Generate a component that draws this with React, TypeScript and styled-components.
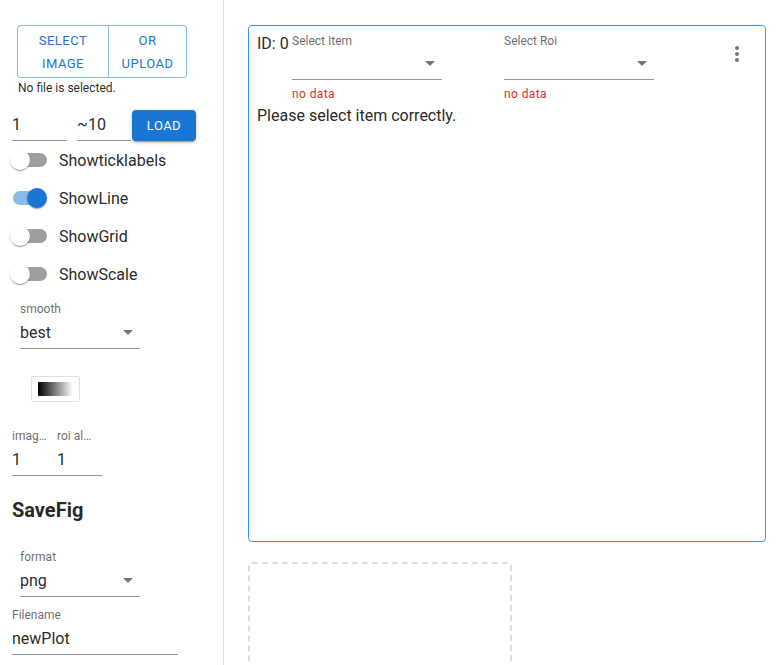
import React, { FC } from 'react';
import styled, { createGlobalStyle } from 'styled-components';

const Global = createGlobalStyle`
  html, body {
    margin: 0;
    padding: 0;
    overflow: hidden;
    font-family: Roboto, 'Liberation Sans', sans-serif;
    color: rgba(0, 0, 0, 0.87);
  }
  * { box-sizing: border-box; }
`;

const blue = '#1976d2';

const Arrow: FC = () => (
  <svg width="24" height="24" viewBox="0 0 24 24">
    <path d="M7 10l5 5 5-5z" fill="rgba(0,0,0,0.54)" />
  </svg>
);

const MoreVert: FC = () => (
  <svg width="24" height="24" viewBox="0 0 24 24">
    <path
      d="M12 8c1.1 0 2-.9 2-2s-.9-2-2-2-2 .9-2 2 .9 2 2 2zm0 2c-1.1 0-2 .9-2 2s.9 2 2 2 2-.9 2-2-.9-2-2-2zm0 6c-1.1 0-2 .9-2 2s.9 2 2 2 2-.9 2-2-.9-2-2-2z"
      fill="rgba(0,0,0,0.54)"
    />
  </svg>
);

const SelectField: FC<{ label: string; value?: string; width: number; helper?: string; className?: string }> = ({
  label,
  value,
  width,
  helper,
  className,
}) => (
  <Field $width={width} className={className}>
    <Label $line={14}>{label}</Label>
    <InputBox>
      <span>{value}</span>
      <Arrow />
    </InputBox>
    {helper && <Helper>{helper}</Helper>}
  </Field>
);

const Toggle: FC<{ label: string; on?: boolean }> = ({ label, on }) => (
  <SwitchRow>
    <SwitchRoot>
      <Track $on={on} />
      <Thumb $on={on} />
    </SwitchRoot>
    <span>{label}</span>
  </SwitchRow>
);

export default function App() {
  return (
    <Page>
      <Global />
      <Sidebar>
        <ButtonGroup>
          <OutlineButton $width={92}>Select image</OutlineButton>
          <OutlineButton $width={78}>or upload</OutlineButton>
        </ButtonGroup>
        <FileNote>No file is selected.</FileNote>
        <RangeRow>
          <Field $width={55}>
            <InputBox>1</InputBox>
          </Field>
          <Field $width={54} style={{ marginLeft: 10 }}>
            <InputBox>~10</InputBox>
          </Field>
          <LoadButton>Load</LoadButton>
        </RangeRow>
        <Toggle label="Showticklabels" />
        <Toggle label="ShowLine" on />
        <Toggle label="ShowGrid" />
        <Toggle label="ShowScale" />
        <Indented $top={8}>
          <Field $width={120}>
            <Label>smooth</Label>
            <InputBox>
              <span>best</span>
              <Arrow />
            </InputBox>
          </Field>
        </Indented>
        <ColormapButton>
          <Gradient />
        </ColormapButton>
        <PairRow>
          <Field $width={45}>
            <Label>imag…</Label>
            <InputBox>1</InputBox>
          </Field>
          <Field $width={45}>
            <Label>roi al…</Label>
            <InputBox>1</InputBox>
          </Field>
        </PairRow>
        <Heading>SaveFig</Heading>
        <Indented $top={27}>
          <Field $width={120}>
            <Label>format</Label>
            <InputBox>
              <span>png</span>
              <Arrow />
            </InputBox>
          </Field>
        </Indented>
        <FilenameField $width={166}>
          <Label>Filename</Label>
          <InputBox>newPlot</InputBox>
        </FilenameField>
      </Sidebar>
      <Main>
        <Card>
          <CardHeader>
            <IdText>ID: 0</IdText>
            <SelectField label="Select Item" width={150} helper="no data" />
            <RoiSelect label="Select Roi" width={150} helper="no data" />
            <IconButton>
              <MoreVert />
            </IconButton>
          </CardHeader>
          <Message>Please select item correctly.</Message>
        </Card>
        <DropZone />
      </Main>
    </Page>
  );
}

const Page = styled.div`
  display: flex;
  min-height: 100vh;
`;

const Sidebar = styled.aside`
  width: 224px;
  flex-shrink: 0;
  min-height: 100vh;
  border-right: 1px solid #e0e0e0;
  padding: 25px 0 0 12px;
  display: flex;
  flex-direction: column;
  align-items: flex-start;
`;

const ButtonGroup = styled.div`
  display: flex;
  margin-left: 5px;
`;

const OutlineButton = styled.button<{ $width: number }>`
  width: ${({ $width }) => $width}px;
  padding: 3px 6px 2px;
  background: #fff;
  border: 1px solid rgba(25, 118, 210, 0.5);
  font-family: Roboto, 'Liberation Sans', sans-serif;
  font-size: 13px;
  font-weight: 400;
  letter-spacing: 0.46px;
  line-height: 23px;
  text-transform: uppercase;
  color: ${blue};
  word-spacing: 40px;
  &:first-child {
    border-radius: 4px 0 0 4px;
  }
  &:last-child {
    border-radius: 0 4px 4px 0;
    border-left: none;
  }
`;

const FileNote = styled.div`
  margin-top: 3px;
  margin-left: 6px;
  font-size: 12px;
  line-height: 14px;
`;

const RangeRow = styled.div`
  display: flex;
  align-items: flex-end;
  margin-top: 14px;
`;

const LoadButton = styled.button`
  width: 64px;
  height: 31px;
  margin-left: 1px;
  border: none;
  border-radius: 4px;
  background: ${blue};
  color: #fff;
  font-family: Roboto, 'Liberation Sans', sans-serif;
  font-size: 13px;
  font-weight: 400;
  letter-spacing: 0.46px;
  text-transform: uppercase;
  box-shadow: 0 3px 1px -2px rgba(0, 0, 0, 0.2), 0 2px 2px 0 rgba(0, 0, 0, 0.14),
    0 1px 5px 0 rgba(0, 0, 0, 0.12);
`;

const Field = styled.div<{ $width: number }>`
  width: ${({ $width }) => $width}px;
  display: flex;
  flex-direction: column;
`;

const Label = styled.div<{ $line?: number }>`
  font-size: 12px;
  line-height: ${({ $line }) => $line ?? 16}px;
  color: rgba(0, 0, 0, 0.6);
  white-space: nowrap;
`;

const InputBox = styled.div`
  height: 32px;
  padding: 4px 0 5px;
  display: flex;
  align-items: center;
  justify-content: space-between;
  font-size: 16px;
  border-bottom: 1px solid rgba(0, 0, 0, 0.42);
  svg {
    flex-shrink: 0;
  }
`;

const Helper = styled.div`
  margin-top: 4px;
  font-size: 12px;
  line-height: 20px;
  letter-spacing: 0.4px;
  color: #d32f2f;
`;

const SwitchRow = styled.div`
  display: flex;
  align-items: center;
  height: 38px;
  margin-left: -11px;
  font-size: 16px;
`;

const SwitchRoot = styled.div`
  width: 58px;
  height: 38px;
  padding: 12px;
  display: flex;
  align-items: center;
`;

const Track = styled.div<{ $on?: boolean }>`
  width: 34px;
  height: 14px;
  border-radius: 7px;
  background: ${({ $on }) => ($on ? 'rgba(25, 118, 210, 0.5)' : 'rgba(0, 0, 0, 0.38)')};
`;

const Thumb = styled.div<{ $on?: boolean }>`
  width: 20px;
  height: 20px;
  flex-shrink: 0;
  border-radius: 50%;
  margin-left: ${({ $on }) => ($on ? '-17px' : '-37px')};
  background: ${({ $on }) => ($on ? blue : '#fff')};
  box-shadow: 0 2px 1px -1px rgba(0, 0, 0, 0.2), 0 1px 1px 0 rgba(0, 0, 0, 0.14),
    0 1px 3px 0 rgba(0, 0, 0, 0.12);
`;

const Indented = styled.div<{ $top: number }>`
  margin: ${({ $top }) => $top}px 0 0 8px;
`;

const ColormapButton = styled.div`
  margin: 27px 0 0 19px;
  padding: 5px 6px;
  border: 1px solid #e0e0e0;
  border-radius: 2px;
`;

const Gradient = styled.div`
  width: 35px;
  height: 14px;
  border-radius: 1px;
  background: linear-gradient(to right, #000, #fff);
`;

const PairRow = styled.div`
  display: flex;
  margin-top: 26px;
`;

const Heading = styled.div`
  margin-top: 22px;
  font-size: 20px;
  line-height: 24px;
  font-weight: 700;
`;

const FilenameField = styled(Field)`
  margin-top: 10px;
`;

const Main = styled.main`
  flex: 1;
  padding: 25px 13px 0 24px;
  display: flex;
  flex-direction: column;
  align-items: flex-start;
`;

const Card = styled.section`
  width: 100%;
  height: 517px;
  padding: 8px;
  border: 1px solid #3d93ec;
  border-radius: 4px;
`;

const CardHeader = styled.div`
  display: flex;
  align-items: flex-start;
`;

const IdText = styled.div`
  width: 35px;
  margin-top: 1px;
  font-size: 16px;
  line-height: 18px;
`;

const RoiSelect = styled(SelectField)`
  margin-left: 62px;
`;

const IconButton = styled.div`
  width: 40px;
  height: 40px;
  margin-left: auto;
  display: flex;
  align-items: center;
  justify-content: center;
  border-radius: 50%;
`;

const Message = styled.div`
  margin-top: 2px;
  font-size: 16px;
  line-height: 20px;
`;

const DropZone = styled.div`
  width: 264px;
  height: 110px;
  margin-top: 20px;
  flex-shrink: 0;
  border: 2px dashed #dcdcdc;
  border-bottom: none;
  border-radius: 4px 4px 0 0;
`;
